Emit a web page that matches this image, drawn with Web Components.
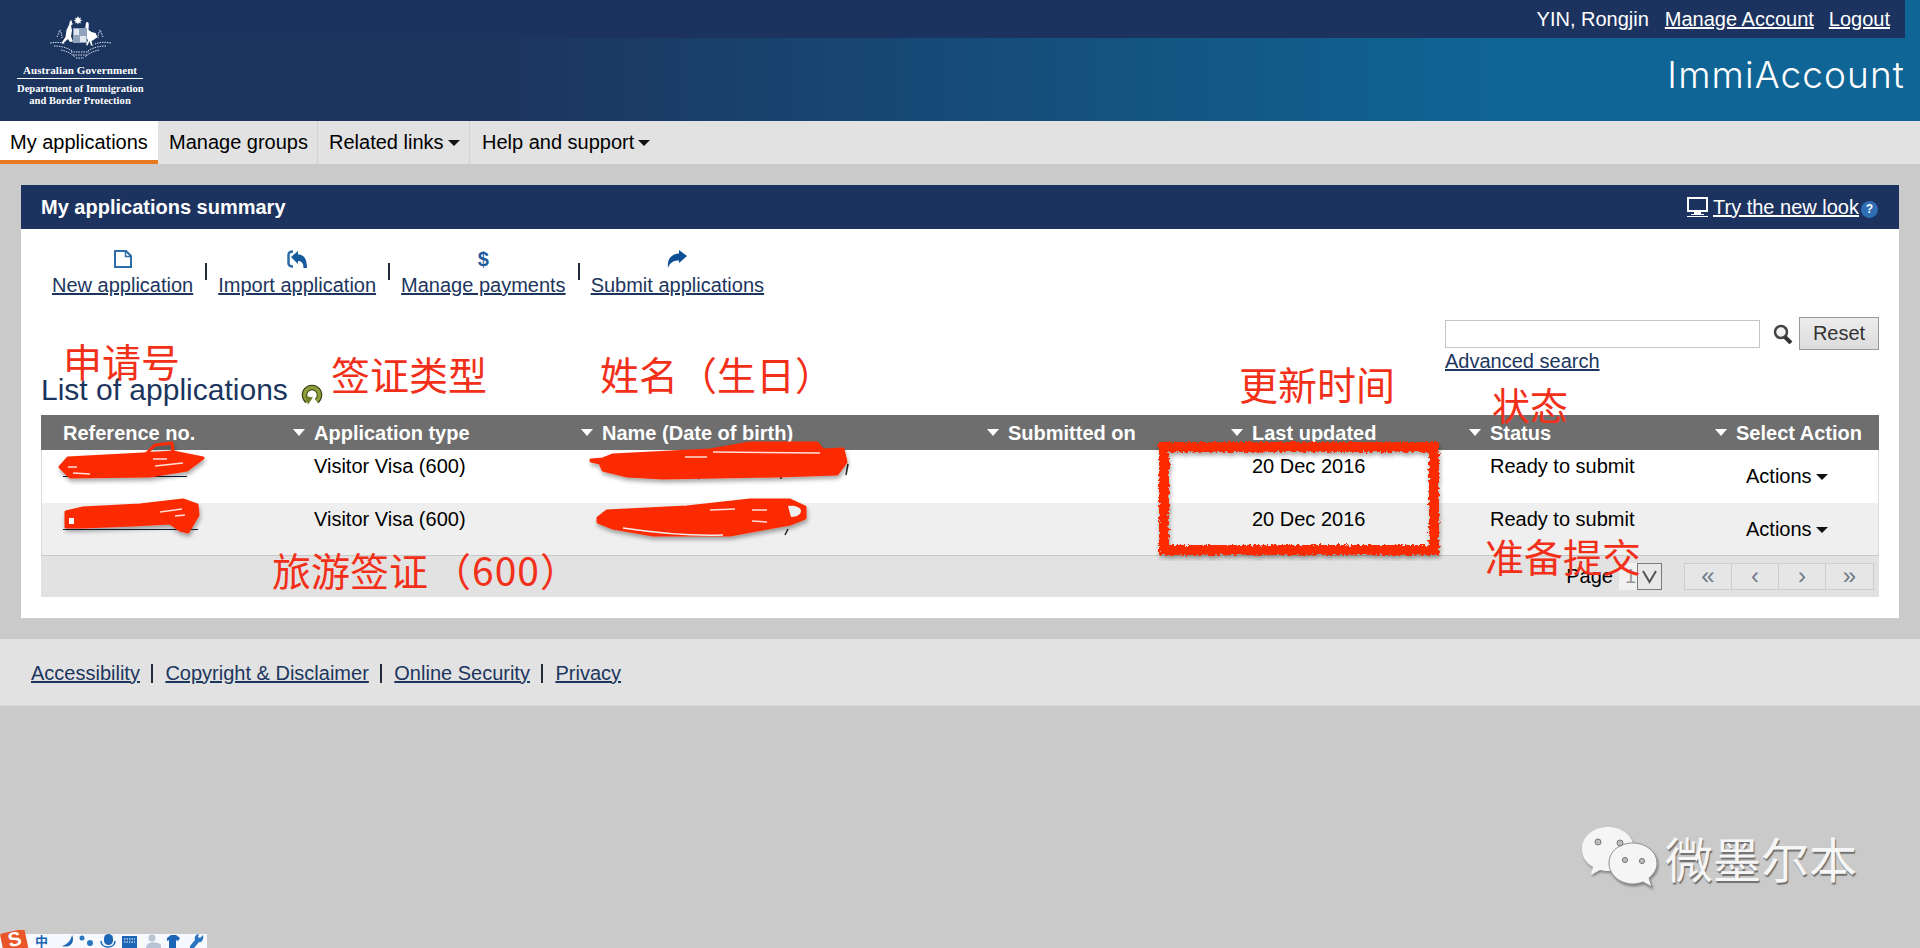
<!DOCTYPE html>
<html lang="en">
<head>
<meta charset="utf-8">
<title>ImmiAccount</title>
<style>
    html, body { margin: 0; padding: 0; }
    body {
        position: relative;
        width: 1920px;
        height: 948px;
        overflow: hidden;
        background: #cacaca;
        color: #000;
        font: 20px/23px "Liberation Sans", Arial, sans-serif;
    }
</style>
</head>
<body>
<imm-header name="YIN, Rongjin"></imm-header>
<imm-nav></imm-nav>
<imm-panel heading="My applications summary">
    <app-toolbar></app-toolbar>
    <list-head></list-head>
    <app-table></app-table>
</imm-panel>
<imm-footer>
    <a href="#">Accessibility</a>
    <a href="#">Copyright &amp; Disclaimer</a>
    <a href="#">Online Security</a>
    <a href="#">Privacy</a>
</imm-footer>
<red-ink></red-ink>
<wechat-mark></wechat-mark>
<ime-bar></ime-bar>

<script>
class ImmHeader extends HTMLElement {
    connectedCallback() {
        this.attachShadow({ mode: 'open' });
        this.shadowRoot.innerHTML = `
            <style>
                :host {
                    display: flex;
                    height: 121px;
                    background: linear-gradient(90deg, #1c355f 0, #1c355f 500px, #0f6595 1500px, #0f6595 100%);
                    color: #fff;
                }
                .logo {
                    width: 160px;
                    flex: none;
                    box-sizing: border-box;
                    padding: 16px 0 0 17px;
                    font: bold 10.5px/12px "Liberation Serif", "Times New Roman", serif;
                    text-align: center;
                    white-space: nowrap;
                }
                .logo-inner { width: 126px; }
                .logo svg { display: block; margin: 0 auto; }
                .gov { font-size: 11px; letter-spacing: .1px; margin-top: 4px; padding-bottom: 1px; border-bottom: 1px solid #fff; line-height: 13px; }
                .dept { margin-top: 4px; letter-spacing: .05px; }
                .right { flex: 1; display: flex; flex-direction: column; }
                .top {
                    height: 38px;
                    margin-right: 15px;
                    background: #1c3360;
                    display: flex;
                    justify-content: flex-end;
                    align-items: center;
                    gap: 15px;
                    padding-right: 15px;
                }
                .top span { margin-right: 1px; }
                a { color: #fff; }
                h1 {
                    margin: 17px 15px 0 0;
                    text-align: right;
                    font: 300 37px/40px Inter, "Open Sans", sans-serif;
                    letter-spacing: 1.1px;
                }
            </style>
            <div class="logo"><div class="logo-inner">
                <svg width="62" height="44" viewBox="50 16 62 44">
                    <path d="M79 16l1 2.200 2-.8-.8 2 2 1-2 1 .8 2-2-.8-1 2-1-2-2 .8.800-2-2-1 2-1-.8-2 2 .8z" fill="#fff"/>
                    <path d="M71 21l1.500-1 .5 3 1 1-2 1.500 1 5-1 6 2 5-3 .5-2-3-5 4.500-1.500-.5 4-6 1-7 2.500-5z" fill="#fff"/>
                    <path d="M87 22.500l2-.5 .8 2-.3 6 3 2 4 1 2 4-4 3-2 1 1 4 1.500.5h-3l-1.500-4.500-2 4.500-1.500-.5 2-5-2.500-3-.5-7z" fill="#fff"/>
                    <rect x="74" y="28" width="14" height="15" fill="#8fa3bd"/>
                    <path d="M75 29h5v6h-5zM81 36h6v6h-6z" fill="#dfe6ef"/>
                    <g fill="none" stroke="#dbe4ef" stroke-width="1" stroke-dasharray="1.500 1">
                        <path d="M51 43c6-1 11-1 15 1M112 43c-6-1-11-1-16 1"/>
                        <path d="M55 46c6 0 12 1 18 5M107 46c-6 0-12 1-18 5"/>
                        <path d="M62 50c5 1 10 3 14 7M100 50c-5 1-10 3-14 7"/>
                        <path d="M72 52h18M74 55h14M77 58h8"/>
                        <path d="M58 37c1-2 2-5 3-7 1 2 2 5 2 8M104 37c-1-2-2-5-3-7-1 2-2 5-2 8"/>
                    </g>
                </svg>
                <div class="gov">Australian Government</div>
                <div class="dept">Department of Immigration<br>and Border Protection</div>
            </div></div>
            <div class="right">
                <div class="top">
                    <span>${this.getAttribute('name')}</span>
                    <a href="#">Manage Account</a>
                    <a href="#">Logout</a>
                </div>
                <h1>ImmiAccount</h1>
            </div>
        `;
    }
}

class ImmNav extends HTMLElement {
    connectedCallback() {
        this.attachShadow({ mode: 'open' });
        this.shadowRoot.innerHTML = `
            <style>
                :host {
                    display: flex;
                    height: 43px;
                    background: #e2e2e2;
                }
                .tab {
                    box-sizing: border-box;
                    height: 43px;
                    padding: 10px 10px 0;
                    border-right: 1px solid #d2d2d2;
                    display: flex;
                    gap: 4px;
                    white-space: nowrap;
                }
                .tab.on {
                    width: 158px;
                    background: #fff;
                    border-right: 0;
                    border-bottom: 4px solid #e8791f;
                }
                .tab.two { width: 160px; padding-left: 11px; }
                .tab.three { width: 152px; padding-left: 11px; }
                .tab.four { border-right: 0; padding-left: 12px; }
                i {
                    width: 0; height: 0;
                    margin-top: 9px;
                    border: 6px solid transparent;
                    border-top: 6px solid #111;
                    border-bottom: 0;
                }
            </style>
            <div class="tab on">My applications</div>
            <div class="tab two">Manage groups</div>
            <div class="tab three">Related links<i></i></div>
            <div class="tab four">Help and support<i></i></div>
        `;
    }
}

class ImmPanel extends HTMLElement {
    connectedCallback() {
        this.attachShadow({ mode: 'open' });
        this.shadowRoot.innerHTML = `
            <style>
                :host {
                    display: block;
                    margin: 21px 21px 0;
                    background: #fff;
                }
                .bar {
                    height: 44px;
                    box-sizing: border-box;
                    background: #1c3360;
                    color: #fff;
                    display: flex;
                    align-items: center;
                    justify-content: space-between;
                    padding: 0 21px 0 20px;
                }
                strong { font-weight: bold; }
                .try { display: flex; align-items: center; }
                .try svg { margin-right: 5px; display: block; }
                a { color: #fff; }
                .help {
                    width: 17px; height: 17px;
                    margin: 4px 0 0 2px;
                    border-radius: 50%;
                    background: #2f6db5;
                    font: bold 12px/17px "Liberation Sans", sans-serif;
                    text-align: center;
                }
                .body { padding: 0 20px 21px 20px; }
            </style>
            <div class="bar">
                <strong>${this.getAttribute('heading')}</strong>
                <div class="try">
                    <svg width="21" height="20" viewBox="0 0 21 20">
                        <path d="M1 1h19v13H1z" fill="none" stroke="#fff" stroke-width="2"/>
                        <path d="M7 15h7v2h3v1H4v-1h3z" fill="#fff"/>
                        <path d="M0 19h21v1H0z" fill="#fff"/>
                    </svg>
                    <a href="#">Try the new look</a>
                    <div class="help">?</div>
                </div>
            </div>
            <div class="body"><slot></slot></div>
        `;
    }
}

class AppToolbar extends HTMLElement {
    connectedCallback() {
        this.attachShadow({ mode: 'open' });
        const icons = {
            doc: `<svg width="18" height="18" viewBox="0 0 18 18"><path d="M1 1h11l5 5v11H1z" fill="none" stroke="#2e6ca8" stroke-width="2"/><path d="M11.500 1v5.500H17" fill="none" stroke="#2e6ca8" stroke-width="1.500"/></svg>`,
            imp: `<svg width="20" height="18" viewBox="0 0 20 18"><path d="M6 1.500C3 1.500 1.500 3 1.500 5v8c0 2 1.500 3.500 4.500 3.500" fill="none" stroke="#2e6ca8" stroke-width="2.500"/><path d="M4 7l7-6v3.500c5 0 9 3 9 13.500h-3.500c0-5-2-7-5.500-7v3z" fill="#175a9e"/></svg>`,
            sub: `<svg width="20" height="18" viewBox="0 0 20 18"><path d="M20 6l-8-6v3.500C5 4 0 8 1 18c1.500-5 5-7.500 11-7.500V13z" fill="#0f4f94"/></svg>`
        };
        const item = (icon, label) => `<div class="item"><div class="ico">${icon}</div><a href="#">${label}</a></div>`;
        this.shadowRoot.innerHTML = `
            <style>
                :host {
                    display: flex;
                    box-sizing: border-box;
                    padding: 21px 0 0 11px;
                    height: 88px;
                    gap: 12px;
                }
                .item { display: flex; flex-direction: column; align-items: center; }
                .ico { height: 18px; margin-bottom: 6px; display: flex; justify-content: center; }
                .ico svg { display: block; }
                .dollar { font: bold 20px/18px "Liberation Sans", sans-serif; color: #1d5a9e; }
                a { color: #1c355e; }
                .sep { width: 2px; height: 17px; margin: 13px -1px 0 0; background: #222b3a; }
            </style>
            ${item(icons.doc, 'New application')}
            <div class="sep"></div>
            ${item(icons.imp, 'Import application')}
            <div class="sep"></div>
            ${item('<span class="dollar">$</span>', 'Manage payments')}
            <div class="sep"></div>
            ${item(icons.sub, 'Submit applications')}
        `;
    }
}

class ListHead extends HTMLElement {
    connectedCallback() {
        this.attachShadow({ mode: 'open' });
        this.shadowRoot.innerHTML = `
            <style>
                :host {
                    display: flex;
                    justify-content: space-between;
                    height: 98px;
                }
                .title {
                    display: flex;
                    align-items: center;
                    gap: 13px;
                    height: 34px;
                    margin-top: 56px;
                    font-size: 30px;
                    line-height: 34px;
                    color: #1c355e;
                }
                .title svg { display: block; margin-top: 8px; }
                .search { width: 434px; }
                .row { display: flex; align-items: center; }
                .box {
                    box-sizing: border-box;
                    width: 315px;
                    height: 28px;
                    margin-right: 13px;
                    background: #fff;
                    border: 1px solid #c4c4c4;
                }
                .row svg { display: block; margin-right: 5px; }
                .reset {
                    box-sizing: border-box;
                    width: 80px;
                    height: 33px;
                    background: linear-gradient(#ededed, #dcdcdc);
                    border: 1px solid #999;
                    color: #333;
                    text-align: center;
                    line-height: 30px;
                }
                a { color: #1c355e; display: inline-block; }
            </style>
            <div class="title">
                List of applications
                <svg width="22" height="21" viewBox="0 0 22 21">
                    <path d="M6.500 17a7.500 7.500 0 1 1 9 0" fill="none" stroke="#2f3a16" stroke-width="5.500"/>
                    <path d="M6.500 17a7.500 7.500 0 1 1 9 0" fill="none" stroke="#8f9f3a" stroke-width="3.500"/>
                    <path d="M4 12l8 1.500-5 7z" fill="#6f8128"/>
                </svg>
            </div>
            <div class="search">
                <div class="row">
                    <div class="box"></div>
                    <svg width="21" height="20" viewBox="0 0 21 20">
                        <circle cx="8" cy="8" r="6" fill="#f2f2f2" stroke="#444" stroke-width="2.500"/>
                        <path d="M12 13l6 6" stroke="#333" stroke-width="4"/>
                    </svg>
                    <div class="reset">Reset</div>
                </div>
                <a href="#">Advanced search</a>
            </div>
        `;
    }
}

class AppTable extends HTMLElement {
    connectedCallback() {
        this.attachShadow({ mode: 'open' });
        const heads = ['Reference no.', 'Application type', 'Name (Date of birth)', 'Submitted on', 'Last updated', 'Status', 'Select Action'];
        const rows = [
            { ref: 124 },
            { ref: 135 }
        ];
        const row = (r, i) => `
            <div class="row ${i % 2 ? 'alt' : ''}">
                <div><a class="ref" style="width:${r.ref}px"></a></div>
                <div>Visitor Visa (600)</div>
                <div></div>
                <div></div>
                <div>20 Dec 2016</div>
                <div>Ready to submit</div>
                <div class="act">Actions<i></i></div>
            </div>`;
        this.shadowRoot.innerHTML = `
            <style>
                :host { display: block; }
                .head, .row {
                    display: grid;
                    grid-template-columns: 251px 288px 406px 244px 238px 246px 165px;
                }
                .head { height: 35px; background: #6e6e6e; color: #fff; font-weight: bold; }
                .head div { position: relative; padding: 7px 0 0 22px; white-space: nowrap; }
                .head div:not(:first-child)::before {
                    content: "";
                    position: absolute;
                    left: 1px; top: 14px;
                    border: 6px solid transparent;
                    border-top: 7px solid #fff;
                    border-bottom: 0;
                }
                .row { height: 53px; box-sizing: border-box; box-shadow: inset 1px 0 #dcdcdc, inset -1px 0 #dcdcdc; }
                .row.alt { background: #efefef; border-bottom: 1px solid #c8c8c8; }
                .row div { padding: 5px 0 0 22px; white-space: nowrap; }
                .ref { display: block; height: 21px; border-bottom: 1px solid #0f1f3c; }
                .row .act { padding: 15px 0 0 32px; display: flex; gap: 4px; }
                .act i {
                    width: 0; height: 0;
                    margin-top: 9px;
                    border: 6px solid transparent;
                    border-top: 6px solid #111;
                    border-bottom: 0;
                }
                .pager {
                    height: 41px;
                    background: #e2e2e2;
                    display: flex;
                    align-items: center;
                    justify-content: flex-end;
                    padding-right: 5px;
                }
                .sel {
                    box-sizing: border-box;
                    display: flex;
                    width: 43px;
                    height: 27px;
                    margin: 0 22px 0 6px;
                    background: #f1f1f1;
                    color: #999;
                    line-height: 27px;
                    padding-left: 6px;
                    justify-content: space-between;
                }
                .sel svg { display: block; flex: none; }
                .btns { display: flex; border: 1px solid #cdcdcd; }
                .btns div {
                    box-sizing: border-box;
                    width: 47px;
                    height: 25px;
                    color: #6f7a88;
                    text-align: center;
                    font-size: 24px;
                    line-height: 23px;
                    background: #e6e6e6;
                    border-right: 1px solid #cdcdcd;
                }
                .btns div:last-child { border-right: 0; }
            </style>
            <div class="head">${heads.map(h => `<div>${h}</div>`).join('')}</div>
            ${rows.map(row).join('')}
            <div class="pager">
                <span>Page</span>
                <div class="sel">1
                    <svg width="25" height="27" viewBox="0 0 25 27">
                        <rect x=".5" y=".5" width="24" height="26" fill="#e8e8e8" stroke="#7a7a7a"/>
                        <path d="M6 8l6.500 11L19 8" fill="none" stroke="#555" stroke-width="2"/>
                    </svg>
                </div>
                <div class="btns"><div>«</div><div>‹</div><div>›</div><div>»</div></div>
            </div>
        `;
    }
}

class ImmFooter extends HTMLElement {
    connectedCallback() {
        this.attachShadow({ mode: 'open' });
        this.shadowRoot.innerHTML = `
            <style>
                :host {
                    display: flex;
                    align-items: center;
                    box-sizing: content-box;
                    height: 64px;
                    margin-top: 21px;
                    padding: 2px 0 0 31px;
                    background: #e2e2e2;
                    border-bottom: 1px solid #d9d9d9;
                    gap: 12px;
                }
                ::slotted(a) { color: #1c355e; }
            </style>
            <slot></slot>
        `;
        [...this.querySelectorAll('a')].slice(0, -1).forEach(a => {
            const sep = document.createElement('span');
            sep.style.cssText = 'width:2px;height:19px;margin-left:-.5px;background:#222b3a';
            a.after(sep);
        });
    }
}

// annotations painted by hand on the original screenshot
class RedInk extends HTMLElement {
    connectedCallback() {
        this.attachShadow({ mode: 'open' });
        const notes = [
            ['申请号', 63, 341, 39],
            ['签证类型', 331, 354, 39],
            ['姓名（生日）', 600, 354, 39],
            ['更新时间', 1239, 364, 39],
            ['状态', 1492, 385, 38],
            ['准备提交', 1485, 536, 39],
            ['旅游签证<b>（600）</b>', 272, 550, 39]
        ];
        this.shadowRoot.innerHTML = `
            <style>
                :host { position: absolute; left: 0; top: 0; width: 1920px; height: 948px; pointer-events: none; }
                svg { position: absolute; left: 0; top: 0; }
                span {
                    position: absolute;
                    white-space: nowrap;
                    line-height: 1;
                    color: #f2301a;
                    font-family: "Noto Sans CJK SC", "Liberation Sans", sans-serif;
                }
                b { font-weight: 400; margin-left: 4px; letter-spacing: 1px; }
            </style>
            <svg width="1920" height="948" viewBox="0 0 1920 948">
                <defs>
                    <filter id="shade" x="-10%" y="-20%" width="120%" height="140%">
                        <feDropShadow dx="1" dy="3" stdDeviation="2" flood-color="#000" flood-opacity=".35"/>
                    </filter>
                    <filter id="rough" x="-5%" y="-10%" width="110%" height="120%">
                        <feTurbulence type="fractalNoise" baseFrequency=".35" numOctaves="2" seed="4"/>
                        <feDisplacementMap in="SourceGraphic" scale="6"/>
                        <feDropShadow dx="1" dy="3" stdDeviation="2" flood-color="#000" flood-opacity=".35"/>
                    </filter>
                </defs>
                <g stroke="#222" stroke-width="1.500" fill="none">
                    <path d="M848 464l-2 11M696 475l3 4M781 476v3M788 529l-3 6"/>
                </g>
                <g filter="url(#shade)" fill="#fb2c00" stroke="#fb2c00" stroke-width="3" stroke-linejoin="round">
                    <path d="M60 467l8-9 75-4 30-2 30 6-16 12-37 6-80 1z"/>
                    <path d="M145 455l10-10 17-2 1 9" fill="none"/>
                    <path d="M66 512l17-4 57-3 43-5 14 5 1 10-10 17-8-2-10-7-37 2-50 2-17 0z"/>
                    <path d="M591 460l12-1 10-4 97-5 40-7 67 0 6 7 20-1 3 13-9 12-60 2-114 2-36-2-24-6-3-7-9-2z"/>
                    <path d="M598 518l9-7 80-4 63-7 40 0 15 7 0 11-15 6-33 6-27 5-77 0-40-7-15-6z"/>
                </g>
                <g stroke="#fff" fill="none" stroke-width="1.500" opacity=".85">
                    <path d="M153 459h14M155 466l28-3M68 467h9M73 473l17 1M160 512l22-3M175 516l10-1"/>
                    <path d="M685 457h22M713 452l107 1"/>
                    <path d="M710 510l25-1M752 510l15 0M752 521l15 1"/>
                </g>
                <rect x="69" y="518" width="5" height="6" fill="#fff"/>
                <path d="M788 506c8-1 13 2 13 5s-4 6-10 6z" fill="#efefef"/>
                <path d="M623 528c40 6 70 8 100 7" stroke="#efefef" stroke-width="1.500" fill="none"/>
                <rect x="1164" y="447" width="270" height="103" fill="none" stroke="#fb2c00" stroke-width="10" filter="url(#rough)"/>
            </svg>
            ${notes.map(n => `<span style="left:${n[1]}px;top:${n[2]}px;font-size:${n[3]}px">${n[0]}</span>`).join('')}
        `;
    }
}

class WechatMark extends HTMLElement {
    connectedCallback() {
        this.attachShadow({ mode: 'open' });
        this.shadowRoot.innerHTML = `
            <style>
                :host {
                    position: absolute;
                    left: 1582px;
                    top: 827px;
                    display: flex;
                    gap: 7px;
                    align-items: flex-start;
                    color: #f6f6f6;
                }
                svg { display: block; overflow: visible; }
                span {
                    margin-top: 6px;
                    font: 400 48px/1 "Noto Sans CJK SC", sans-serif;
                    text-shadow: 1px 2px 1px rgba(0,0,0,.45);
                    white-space: nowrap;
                }
            </style>
            <svg width="76" height="66" viewBox="0 0 76 66" style="filter:drop-shadow(1px 2px 1px rgba(0,0,0,.35))">
                <path d="M26 0c14 0 26 9 26 22s-12 22-26 22c-3 0-6-.5-8-1l-9 5 2-8C4 36 0 30 0 22 0 9 12 0 26 0z" fill="#f5f5f5"/>
                <path d="M51 16c13 0 24 9 24 20 0 6-3 11-8 15l3 9-9-5c-3 1-7 2-10 2-13 0-24-9-24-21s11-20 24-20z" fill="#f5f5f5" stroke="#8e8e8e" stroke-width="1"/>
                <g fill="#bdbdbd" stroke="#777" stroke-width="1">
                    <circle cx="16" cy="15" r="3"/><circle cx="38" cy="16" r="3"/>
                    <circle cx="43" cy="33" r="2.600"/><circle cx="60" cy="34" r="2.600"/>
                </g>
            </svg>
            <span>微墨尔本</span>
        `;
    }
}

class ImeBar extends HTMLElement {
    connectedCallback() {
        this.attachShadow({ mode: 'open' });
        this.shadowRoot.innerHTML = `
            <style>
                :host {
                    position: absolute;
                    left: 0;
                    top: 930px;
                    width: 207px;
                    height: 18px;
                    overflow: hidden;
                }
                .strip { position: absolute; left: 0; top: 4px; width: 207px; height: 14px; background: #f6f9fd; }
                .logo {
                    position: absolute;
                    left: 2px; top: 1px;
                    width: 25px; height: 24px;
                    background: #e8562a;
                    transform: rotate(-12deg);
                    border-radius: 2px;
                }
                .s {
                    position: absolute;
                    left: 3px; top: 0;
                    width: 23px;
                    height: 18px;
                    color: #fff;
                    font: bold 20px/19px "Liberation Sans", sans-serif;
                    text-align: center;
                    transform: rotate(-12deg);
                }
                .zh { position: absolute; left: 35px; top: 4px; font: bold 13px/14px "Noto Sans CJK SC", sans-serif; color: #1d66b5; }
                svg { position: absolute; left: 0; top: 0; }
            </style>
            <div class="strip"></div>
            <div class="logo"></div>
            <div class="s">S</div>
            <div class="zh">中</div>
            <svg width="207" height="18" viewBox="0 0 207 18">
                <path d="M72 5c-1 5-4 9-10 11 6 2 11-1 11-7 0-2-.5-3-1-4z" fill="#1d66b5"/>
                <circle cx="82" cy="8" r="2.500" fill="#2a75c0"/><circle cx="90" cy="13" r="3" fill="#2a75c0"/>
                <rect x="104" y="4" width="9" height="11" rx="4.500" fill="#1d66b5"/>
                <path d="M101 11c0 8 14 8 14 0" fill="none" stroke="#1d66b5" stroke-width="1.500"/>
                <rect x="122" y="6" width="15" height="12" fill="#1d66b5"/>
                <path d="M124 9h11M124 12h11" stroke="#fff" stroke-width="1" stroke-dasharray="1.500 1"/>
                <circle cx="152" cy="8" r="3.500" fill="#b8c4d4"/><path d="M146 18c0-7 12-7 15-3v3z" fill="#b8c4d4"/>
                <path d="M167 8l4-3h5l4 3-2 3-2-1v8h-7v-8l-2 1z" fill="#1d66b5"/>
                <path d="M203 5l-3 3-2-1 1-3c-3 0-5 3-4 6l-5 6v2h4l5-6c3 1 5-3 4-7z" fill="#2a75c0"/>
            </svg>
        `;
    }
}

customElements.define('imm-header', ImmHeader);
customElements.define('imm-nav', ImmNav);
customElements.define('imm-panel', ImmPanel);
customElements.define('app-toolbar', AppToolbar);
customElements.define('list-head', ListHead);
customElements.define('app-table', AppTable);
customElements.define('imm-footer', ImmFooter);
customElements.define('red-ink', RedInk);
customElements.define('wechat-mark', WechatMark);
customElements.define('ime-bar', ImeBar);
</script>
</body>
</html>
